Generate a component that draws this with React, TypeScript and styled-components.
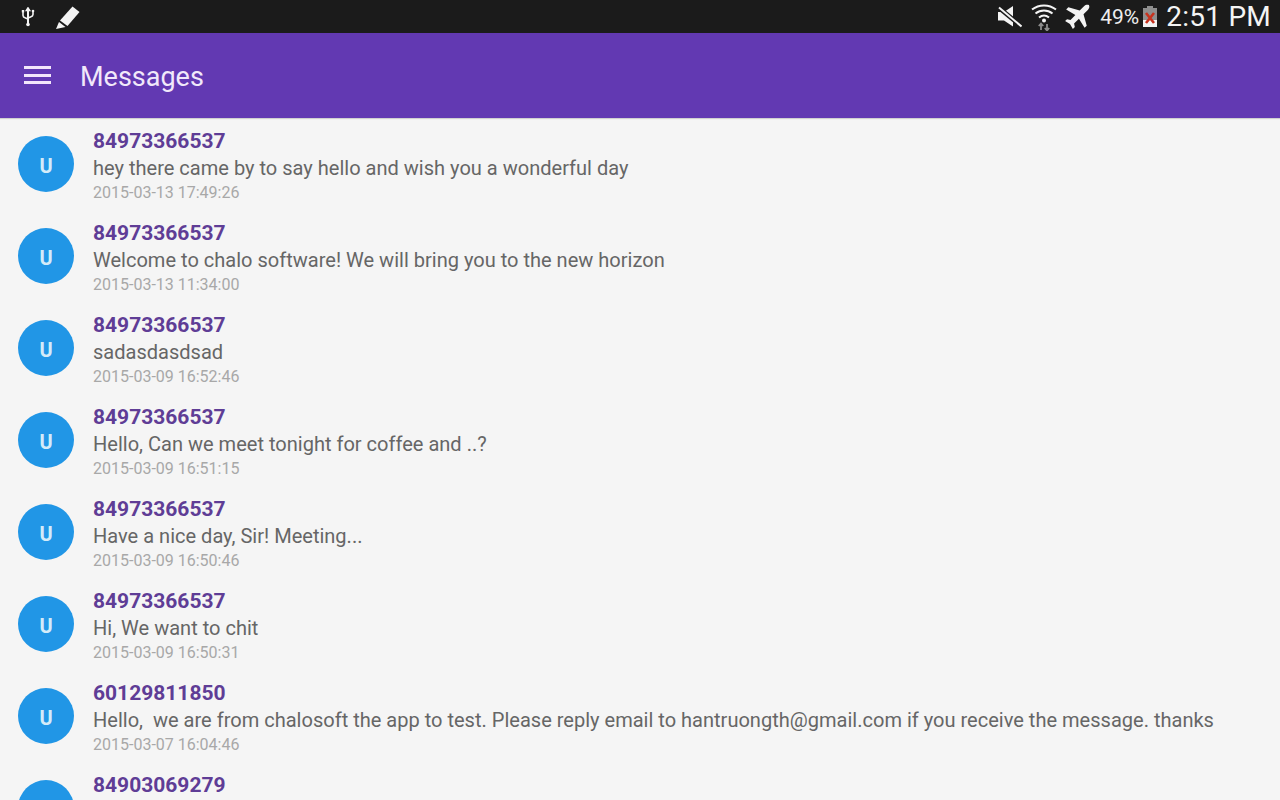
import styled, { createGlobalStyle } from "styled-components";

const GlobalStyle = createGlobalStyle`
  html, body {
    margin: 0;
    padding: 0;
    height: 100%;
    overflow: hidden;
    background: #f5f5f5;
    font-family: Roboto, "Liberation Sans", sans-serif;
  }
`;

const Page = styled.div`
  width: 1280px;
  height: 800px;
  overflow: hidden;
  display: flex;
  flex-direction: column;
`;

const StatusBar = styled.div`
  height: 33px;
  flex: none;
  background: #1b1b1b;
  display: flex;
  align-items: center;
  justify-content: space-between;
  padding: 0 9px 0 21px;
  color: #f4f4f4;
`;

const StatusGroup = styled.div`
  display: flex;
  align-items: center;
`;

const Glyph = styled.svg<{ $gap?: number }>`
  flex: none;
  margin-left: ${(p) => p.$gap ?? 0}px;
`;

const BatteryText = styled.span`
  font-size: 21px;
  margin-left: 10px;
  color: #eeeeee;
`;

const Clock = styled.span`
  font-size: 28px;
  margin-left: 8px;
  letter-spacing: 0.25px;
  color: #f4f4f4;
`;

const AppBar = styled.header`
  height: 85px;
  flex: none;
  background: #6239b2;
  display: flex;
  align-items: center;
  padding: 2px 0 0 24px;
  box-sizing: border-box;
  box-shadow: 0 1px 1px rgba(0, 0, 0, 0.15);
`;

const MenuIcon = styled.div`
  width: 27px;
  height: 18px;
  display: flex;
  flex-direction: column;
  justify-content: space-between;
  margin: 0 29px 3px 0;

  span {
    display: block;
    height: 3px;
    background: #f3e6fb;
  }
`;

const Title = styled.h1`
  margin: 0;
  font-size: 27px;
  font-weight: 400;
  color: #f1e8fa;
`;

const List = styled.div`
  display: flex;
  flex-direction: column;
`;

const Row = styled.div`
  height: 92px;
  flex: none;
  display: flex;
  align-items: flex-start;
  padding-left: 18px;
  box-sizing: border-box;
`;

const Avatar = styled.div`
  width: 56px;
  height: 56px;
  margin-top: 18px;
  margin-right: 19px;
  padding-top: 3px;
  box-sizing: border-box;
  border-radius: 50%;
  background: #2196e6;
  color: #d4ebf9;
  font-size: 20px;
  font-weight: 700;
  display: flex;
  align-items: center;
  justify-content: center;
  flex: none;
`;

const Body = styled.div`
  display: flex;
  flex-direction: column;
  padding-top: 9px;
`;

const Sender = styled.div`
  font-size: 21px;
  line-height: 28px;
  font-weight: 700;
  color: #5f3d96;
`;

const Text = styled.div`
  font-size: 20.05px;
  line-height: 26px;
  margin-bottom: 2px;
  color: #666666;
  white-space: pre;
`;

const Time = styled.div`
  font-size: 16px;
  line-height: 20px;
  color: #a8a8a8;
`;

interface Message {
  sender: string;
  text: string;
  time: string;
}

const messages: Message[] = [
  { sender: "84973366537", text: "hey there came by to say hello and wish you a wonderful day", time: "2015-03-13 17:49:26" },
  { sender: "84973366537", text: "Welcome to chalo software! We will bring you to the new horizon", time: "2015-03-13 11:34:00" },
  { sender: "84973366537", text: "sadasdasdsad", time: "2015-03-09 16:52:46" },
  { sender: "84973366537", text: "Hello, Can we meet tonight for coffee and ..?", time: "2015-03-09 16:51:15" },
  { sender: "84973366537", text: "Have a nice day, Sir! Meeting...", time: "2015-03-09 16:50:46" },
  { sender: "84973366537", text: "Hi, We want to chit", time: "2015-03-09 16:50:31" },
  { sender: "60129811850", text: "Hello,  we are from chalosoft the app to test. Please reply email to hantruongth@gmail.com if you receive the message. thanks", time: "2015-03-07 16:04:46" },
  { sender: "84903069279", text: "", time: "" },
];

function UsbIcon() {
  return (
    <Glyph width="14" height="20" viewBox="0 0 14 20" fill="none" stroke="currentColor" strokeWidth="1.6">
      <path d="M7 1v17" strokeWidth="2" />
      <path d="M7 1 5.4 3.5h3.2z" fill="currentColor" />
      <path d="M2 5v3.5c0 1.5 1 2 2.5 2.5L7 12" />
      <path d="M12 5v2.500c0 1.500-1 2-2.500 2.500L7 11" />
      <rect x="0.8" y="3" width="2.4" height="2.4" fill="currentColor" stroke="none" />
      <circle cx="12" cy="4" r="1.3" fill="currentColor" stroke="none" />
      <circle cx="7" cy="17.5" r="1.8" fill="currentColor" stroke="none" />
    </Glyph>
  );
}

function PenIcon() {
  return (
    <Glyph $gap={20} width="26" height="24" viewBox="0 0 26 24" fill="currentColor">
      <path d="M17.500 1.500 24.500 7 12.500 21 5 15.500z" />
      <path d="M4 17 10.500 22 1 24z" />
    </Glyph>
  );
}

function MuteIcon() {
  return (
    <Glyph width="24" height="24" viewBox="0 0 24 24" fill="currentColor">
      <path d="M0 7h6l9-6v20.500l-9-6H0z" />
      <path d="M0 2 23 21" stroke="#1b1b1b" strokeWidth="4.500" />
      <path d="M1 2.500 23.500 21.500" stroke="currentColor" strokeWidth="2" />
    </Glyph>
  );
}

function WifiIcon() {
  return (
    <Glyph $gap={9} width="26" height="28" viewBox="0 0 26 28" fill="none" stroke="currentColor" strokeWidth="2">
      <path d="M1 6.500C8 1 18 1 25 6.500" />
      <path d="M4.500 10.500C9.500 6.500 16.500 6.500 21.500 10.500" />
      <path d="M8 14.500C11 12 15 12 18 14.500" />
      <circle cx="13" cy="17.500" r="2" fill="currentColor" stroke="none" />
      <path d="M10 27v-6M7.800 23l2.200-2.500 2.200 2.500M16 21v6M13.800 25l2.200 2.500 2.200-2.500" stroke="#8d8d8d" strokeWidth="1.800" />
    </Glyph>
  );
}

function PlaneIcon() {
  return (
    <Glyph $gap={7} width="26" height="26" viewBox="0 0 24 24" fill="currentColor">
      <path d="M23 1c-1.300-.8-3.200-.3-4.300.8L14.500 6 4 3 2 5l8.500 5.200L6 14.700 2.800 14 1 15.800l4.500 2.700L8.200 23l1.800-1.800-.7-3.200 4.500-4.500L19 22l2-2-3-10.500 4.200-4.200C23.300 4.200 23.800 2.300 23 1z" />
    </Glyph>
  );
}

function BatteryIcon() {
  return (
    <Glyph $gap={3} width="16" height="22" viewBox="0 0 16 22">
      <rect x="5" y="0" width="6" height="3" fill="#8f8f8f" />
      <rect x="1" y="2" width="14" height="12" fill="#8f8f8f" />
      <rect x="1" y="14" width="14" height="7" fill="#f4f4f4" />
      <path d="M4 7l8 10M12 7 4 17" stroke="#c8321e" strokeWidth="2.600" />
    </Glyph>
  );
}

function App() {
  return (
    <Page>
      <GlobalStyle />
      <StatusBar>
        <StatusGroup>
          <UsbIcon />
          <PenIcon />
        </StatusGroup>
        <StatusGroup>
          <MuteIcon />
          <WifiIcon />
          <PlaneIcon />
          <BatteryText>49%</BatteryText>
          <BatteryIcon />
          <Clock>2:51 PM</Clock>
        </StatusGroup>
      </StatusBar>
      <AppBar>
        <MenuIcon>
          <span />
          <span />
          <span />
        </MenuIcon>
        <Title>Messages</Title>
      </AppBar>
      <List>
        {messages.map((m, i) => (
          <Row key={i}>
            <Avatar>U</Avatar>
            <Body>
              <Sender>{m.sender}</Sender>
              <Text>{m.text}</Text>
              <Time>{m.time}</Time>
            </Body>
          </Row>
        ))}
      </List>
    </Page>
  );
}

export default App;
